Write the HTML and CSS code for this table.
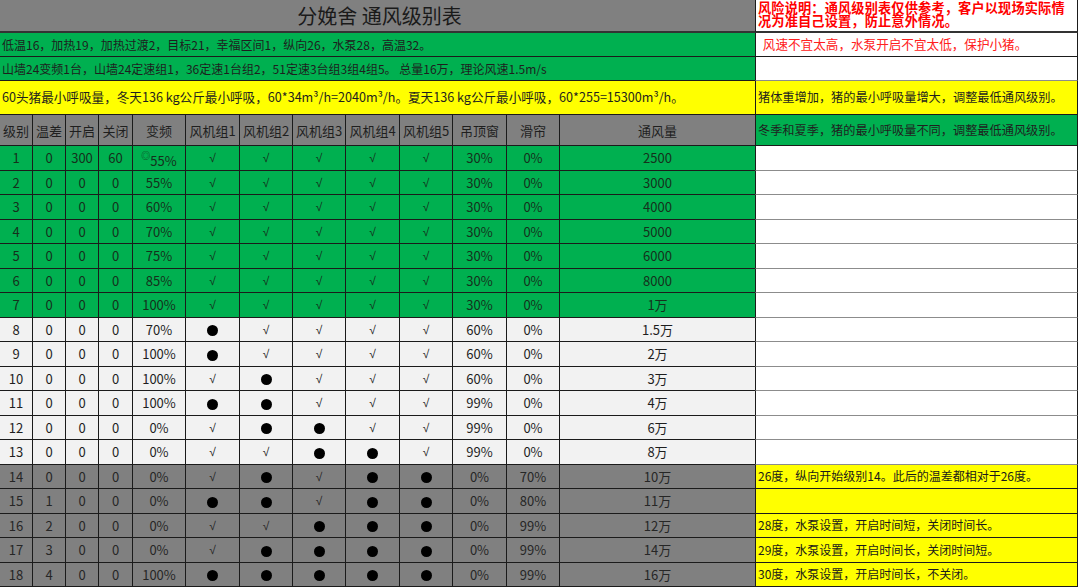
FILE: index.html
```html
<!DOCTYPE html>
<html lang="zh">
<head>
<meta charset="utf-8">
<title>分娩舍 通风级别表</title>
<link rel="stylesheet" href="styles.css">
</head>
<body>
<div class="sheet">
  <div class="row">
    <div class="c title span">分娩舍 通风级别表</div>
    <div class="c note risk">风险说明：通风级别表仅供参考，客户以现场实际情况为准自己设置，防止意外情况。</div>
  </div>
  <div class="row">
    <div class="c info green span">低温16，加热19，加热过渡2，目标21，幸福区间1，纵向26，水泵28，高温32。</div>
    <div class="c note warn">&nbsp;风速不宜太高，水泵开启不宜太低，保护小猪。</div>
  </div>
  <div class="row">
    <div class="c info green span">山墙24变频1台，山墙24定速组1，36定速1台组2，51定速3台组3组4组5。 总量16万，理论风速1.5m/s</div>
    <div class="c note white"></div>
  </div>
  <div class="row">
    <div class="c info yellow span big">60头猪最小呼吸量，冬天136 kg公斤最小呼吸，60*34m³/h=2040m³/h。夏天136 kg公斤最小呼吸，60*255=15300m³/h。</div>
    <div class="c note yellow big">猪体重增加，猪的最小呼吸量增大，调整最低通风级别。</div>
  </div>
  <div class="row head">
    <div class="c">级别</div><div class="c">温差</div><div class="c">开启</div><div class="c">关闭</div><div class="c">变频</div>
    <div class="c">风机组1</div><div class="c">风机组2</div><div class="c">风机组3</div><div class="c">风机组4</div><div class="c">风机组5</div>
    <div class="c">吊顶窗</div><div class="c">滑帘</div><div class="c">通风量</div>
    <div class="c note green big">冬季和夏季，猪的最小呼吸量不同，调整最低通风级别。</div>
  </div>

  <div class="row g">
    <div class="c">1</div><div class="c">0</div><div class="c">300</div><div class="c">60</div><div class="c"><span class="mark">◎</span><span class="low">55%</span></div>
    <div class="c"><span class="ck">√</span></div><div class="c"><span class="ck">√</span></div><div class="c"><span class="ck">√</span></div><div class="c"><span class="ck">√</span></div><div class="c"><span class="ck">√</span></div>
    <div class="c">30%</div><div class="c">0%</div><div class="c">2500</div><div class="c note white"></div>
  </div>
  <div class="row g">
    <div class="c">2</div><div class="c">0</div><div class="c">0</div><div class="c">0</div><div class="c">55%</div>
    <div class="c"><span class="ck">√</span></div><div class="c"><span class="ck">√</span></div><div class="c"><span class="ck">√</span></div><div class="c"><span class="ck">√</span></div><div class="c"><span class="ck">√</span></div>
    <div class="c">30%</div><div class="c">0%</div><div class="c">3000</div><div class="c note white"></div>
  </div>
  <div class="row g">
    <div class="c">3</div><div class="c">0</div><div class="c">0</div><div class="c">0</div><div class="c">60%</div>
    <div class="c"><span class="ck">√</span></div><div class="c"><span class="ck">√</span></div><div class="c"><span class="ck">√</span></div><div class="c"><span class="ck">√</span></div><div class="c"><span class="ck">√</span></div>
    <div class="c">30%</div><div class="c">0%</div><div class="c">4000</div><div class="c note white"></div>
  </div>
  <div class="row g">
    <div class="c">4</div><div class="c">0</div><div class="c">0</div><div class="c">0</div><div class="c">70%</div>
    <div class="c"><span class="ck">√</span></div><div class="c"><span class="ck">√</span></div><div class="c"><span class="ck">√</span></div><div class="c"><span class="ck">√</span></div><div class="c"><span class="ck">√</span></div>
    <div class="c">30%</div><div class="c">0%</div><div class="c">5000</div><div class="c note white"></div>
  </div>
  <div class="row g">
    <div class="c">5</div><div class="c">0</div><div class="c">0</div><div class="c">0</div><div class="c">75%</div>
    <div class="c"><span class="ck">√</span></div><div class="c"><span class="ck">√</span></div><div class="c"><span class="ck">√</span></div><div class="c"><span class="ck">√</span></div><div class="c"><span class="ck">√</span></div>
    <div class="c">30%</div><div class="c">0%</div><div class="c">6000</div><div class="c note white"></div>
  </div>
  <div class="row g">
    <div class="c">6</div><div class="c">0</div><div class="c">0</div><div class="c">0</div><div class="c">85%</div>
    <div class="c"><span class="ck">√</span></div><div class="c"><span class="ck">√</span></div><div class="c"><span class="ck">√</span></div><div class="c"><span class="ck">√</span></div><div class="c"><span class="ck">√</span></div>
    <div class="c">30%</div><div class="c">0%</div><div class="c">8000</div><div class="c note white"></div>
  </div>
  <div class="row g">
    <div class="c">7</div><div class="c">0</div><div class="c">0</div><div class="c">0</div><div class="c">100%</div>
    <div class="c"><span class="ck">√</span></div><div class="c"><span class="ck">√</span></div><div class="c"><span class="ck">√</span></div><div class="c"><span class="ck">√</span></div><div class="c"><span class="ck">√</span></div>
    <div class="c">30%</div><div class="c">0%</div><div class="c">1万</div><div class="c note white"></div>
  </div>

  <div class="row l">
    <div class="c">8</div><div class="c">0</div><div class="c">0</div><div class="c">0</div><div class="c">70%</div>
    <div class="c"><i class="dot"></i></div><div class="c"><span class="ck">√</span></div><div class="c"><span class="ck">√</span></div><div class="c"><span class="ck">√</span></div><div class="c"><span class="ck">√</span></div>
    <div class="c">60%</div><div class="c">0%</div><div class="c">1.5万</div><div class="c note white"></div>
  </div>
  <div class="row l">
    <div class="c">9</div><div class="c">0</div><div class="c">0</div><div class="c">0</div><div class="c">100%</div>
    <div class="c"><i class="dot"></i></div><div class="c"><span class="ck">√</span></div><div class="c"><span class="ck">√</span></div><div class="c"><span class="ck">√</span></div><div class="c"><span class="ck">√</span></div>
    <div class="c">60%</div><div class="c">0%</div><div class="c">2万</div><div class="c note white"></div>
  </div>
  <div class="row l">
    <div class="c">10</div><div class="c">0</div><div class="c">0</div><div class="c">0</div><div class="c">100%</div>
    <div class="c"><span class="ck">√</span></div><div class="c"><i class="dot"></i></div><div class="c"><span class="ck">√</span></div><div class="c"><span class="ck">√</span></div><div class="c"><span class="ck">√</span></div>
    <div class="c">60%</div><div class="c">0%</div><div class="c">3万</div><div class="c note white"></div>
  </div>
  <div class="row l">
    <div class="c">11</div><div class="c">0</div><div class="c">0</div><div class="c">0</div><div class="c">100%</div>
    <div class="c"><i class="dot"></i></div><div class="c"><i class="dot"></i></div><div class="c"><span class="ck">√</span></div><div class="c"><span class="ck">√</span></div><div class="c"><span class="ck">√</span></div>
    <div class="c">99%</div><div class="c">0%</div><div class="c">4万</div><div class="c note white"></div>
  </div>
  <div class="row l">
    <div class="c">12</div><div class="c">0</div><div class="c">0</div><div class="c">0</div><div class="c">0%</div>
    <div class="c"><span class="ck">√</span></div><div class="c"><i class="dot"></i></div><div class="c"><i class="dot"></i></div><div class="c"><span class="ck">√</span></div><div class="c"><span class="ck">√</span></div>
    <div class="c">99%</div><div class="c">0%</div><div class="c">6万</div><div class="c note white"></div>
  </div>
  <div class="row l">
    <div class="c">13</div><div class="c">0</div><div class="c">0</div><div class="c">0</div><div class="c">0%</div>
    <div class="c"><span class="ck">√</span></div><div class="c"><span class="ck">√</span></div><div class="c"><i class="dot"></i></div><div class="c"><i class="dot"></i></div><div class="c"><span class="ck">√</span></div>
    <div class="c">99%</div><div class="c">0%</div><div class="c">8万</div><div class="c note white"></div>
  </div>

  <div class="row d">
    <div class="c">14</div><div class="c">0</div><div class="c">0</div><div class="c">0</div><div class="c">0%</div>
    <div class="c"><span class="ck">√</span></div><div class="c"><i class="dot"></i></div><div class="c"><span class="ck">√</span></div><div class="c"><i class="dot"></i></div><div class="c"><i class="dot"></i></div>
    <div class="c">0%</div><div class="c">70%</div><div class="c">10万</div><div class="c note yellow serif">26度，纵向开始级别14。此后的温差都相对于26度。</div>
  </div>
  <div class="row d">
    <div class="c">15</div><div class="c">1</div><div class="c">0</div><div class="c">0</div><div class="c">0%</div>
    <div class="c"><i class="dot"></i></div><div class="c"><i class="dot"></i></div><div class="c"><span class="ck">√</span></div><div class="c"><i class="dot"></i></div><div class="c"><i class="dot"></i></div>
    <div class="c">0%</div><div class="c">80%</div><div class="c">11万</div><div class="c note yellow serif"></div>
  </div>
  <div class="row d">
    <div class="c">16</div><div class="c">2</div><div class="c">0</div><div class="c">0</div><div class="c">0%</div>
    <div class="c"><span class="ck">√</span></div><div class="c"><span class="ck">√</span></div><div class="c"><i class="dot"></i></div><div class="c"><i class="dot"></i></div><div class="c"><i class="dot"></i></div>
    <div class="c">0%</div><div class="c">99%</div><div class="c">12万</div><div class="c note yellow serif">28度，水泵设置，开启时间短，关闭时间长。</div>
  </div>
  <div class="row d">
    <div class="c">17</div><div class="c">3</div><div class="c">0</div><div class="c">0</div><div class="c">0%</div>
    <div class="c"><span class="ck">√</span></div><div class="c"><i class="dot"></i></div><div class="c"><i class="dot"></i></div><div class="c"><i class="dot"></i></div><div class="c"><i class="dot"></i></div>
    <div class="c">0%</div><div class="c">99%</div><div class="c">14万</div><div class="c note yellow serif">29度，水泵设置，开启时间长，关闭时间短。</div>
  </div>
  <div class="row d">
    <div class="c">18</div><div class="c">4</div><div class="c">0</div><div class="c">0</div><div class="c">100%</div>
    <div class="c"><i class="dot"></i></div><div class="c"><i class="dot"></i></div><div class="c"><i class="dot"></i></div><div class="c"><i class="dot"></i></div><div class="c"><i class="dot"></i></div>
    <div class="c">0%</div><div class="c">99%</div><div class="c">16万</div><div class="c note yellow serif">30度，水泵设置，开启时间长，不关闭。</div>
  </div>
</div>
</body>
</html>
```

FILE: styles.css
```css
* { box-sizing: border-box; }
html, body { margin: 0; padding: 0; background: #ffffff; }
body {
  font-family: "Noto Sans CJK SC", "Noto Sans", sans-serif;
  color: #1e1e1e;
  width: 1080px;
  height: 587px;
  overflow: hidden;
}
.sheet {
  display: grid;
  grid-template-columns: 33px 33px 33px 34px 53px 54px 53px 53px 54px 53px 54px 53px 196px 322px;
  grid-template-rows: 34px 24px 24px 34px 31px repeat(18, 24.5px);
  width: 1078px;
  margin-top: -1px;
}
.row { display: contents; }
.c {
  display: flex;
  align-items: center;
  justify-content: center;
  border-right: 1px solid #1b1b1b;
  border-bottom: 1px solid #1b1b1b;
  font-size: 13px;
  line-height: 1;
  white-space: nowrap;
  overflow: hidden;
}
.span { grid-column: 1 / 14; }
.title {
  background: #808080;
  font-size: 20px;
  color: #1a1a1a;
  border-top: 1px solid #555;
  border-bottom: 2px solid #333;
  padding-left: 4px;
}
.info {
  justify-content: flex-start;
  padding-left: 2px;
  font-size: 12px;
}
.info.big { font-size: 12.6px; }
.green { background: #00b050; }
.yellow { background: #ffff00; }
.white { background: #ffffff; }
.note {
  justify-content: flex-start;
  padding-left: 2px;
  font-size: 12.3px;
  border-left: 1px solid #1b1b1b;
  margin-left: -1px;
}
.note.white { border-bottom-color: #8c8c8c; }
.risk {
  background: #ffffff;
  color: #ff0000;
  font-weight: bold;
  font-size: 13.2px;
  line-height: 13px;
  white-space: normal;
  align-items: flex-start;
  padding-top: 2px;
  padding-right: 4px;
  letter-spacing: 0.15px;
  border-bottom: 2px solid #333;
  overflow: visible;
}
.warn {
  background: #ffffff;
  color: #ff2020;
  font-size: 12.6px;
  padding-left: 4px;
  border-bottom-color: #1b1b1b;
}
.note.big { font-size: 12.2px; }
.serif {
  font-family: "Noto Sans CJK SC", "DejaVu Sans", sans-serif;
  font-size: 12px;
}
.head > .c { background: #808080; color: #1f1f1f; font-size: 13px; }
.head > .c.note { background: #00b050; font-size: 12.2px; }
.g > .c { background: #00b050; color: #15301c; }
.l > .c { background: #f2f2f2; }
.d > .c { background: #808080; color: #262626; }
.g > .c.note, .l > .c.note { background: #ffffff; }
.d > .c.note { background: #ffff00; color: #1a1a1a; }
.ck {
  font-family: "Liberation Sans", "DejaVu Sans", sans-serif;
  font-size: 12px;
  margin-top: 1px;
}
.mark { font-size: 9px; align-self: flex-start; margin-top: 5px; }
.low { margin-top: 6px; }
.dot {
  display: block;
  width: 11px;
  height: 11px;
  border-radius: 50%;
  background: #000;
  margin-top: 3px;
}
```
